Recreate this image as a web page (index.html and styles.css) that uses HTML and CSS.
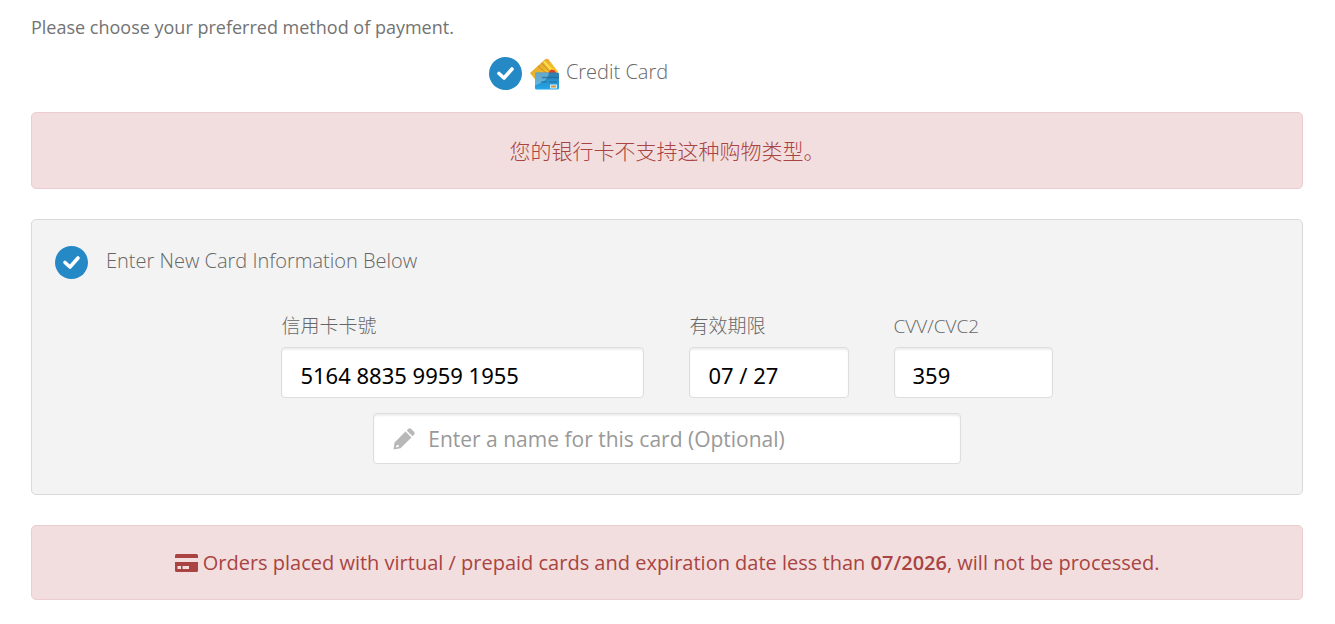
FILE: index.html
```html
<!DOCTYPE html>
<html lang="en">
<head>
<meta charset="utf-8">
<meta name="viewport" content="width=device-width, initial-scale=1">
<title>Payment method</title>
<link rel="stylesheet" href="styles.css">
</head>
<body>
<main class="payment">
  <p class="intro">Please choose your preferred method of payment.</p>
  <label class="method">
    <input class="tick" type="radio" name="method" checked>
    <svg class="cards-icon" viewBox="0 0 30 32" aria-hidden="true">
      <defs>
        <linearGradient id="gold" x1="0" y1="0" x2="1" y2="1"><stop offset="0" stop-color="#d99a35"/><stop offset=".5" stop-color="#f0b829"/><stop offset="1" stop-color="#ffdc24"/></linearGradient>
        <linearGradient id="blue" x1="0" y1="0" x2="0" y2="1"><stop offset="0" stop-color="#2c7cad"/><stop offset=".45" stop-color="#2a8fc8"/><stop offset="1" stop-color="#1fa8ec"/></linearGradient>
      </defs>
      <path d="M0 15 15 1.500Q17 0 18.500 1.500L28 13.500 21 24 7 24Z" fill="url(#gold)"/>
      <path d="M8 8l8 7M11.500 5 21 15" stroke="#c98a2c" stroke-width="1"/>
      <path d="M14 3.500 24 14.500" stroke="#ffe04b" stroke-width="2"/>
      <path d="m18 15 3-3.500 4 1 1 2.500Z" fill="#de3d28"/>
      <path d="M5 16v14q0 1.500 1.500 1.500h21q1.500 0 1.500-1.500V16q0-1.500-1.500-1.500h-21Q5 14.500 5 16Z" fill="url(#blue)"/>
      <path d="M5 16q0-1.500 1.500-1.500H19q0 8-14 13Z" fill="#8cc4de" opacity=".6"/>
      <path d="M12 19.500H29" stroke="#23658e" stroke-width="1.500" opacity=".7"/>
      <path d="M11 24h6m2 0h8" stroke="#1e6fa3"/>
      <path d="M20 26.500h7v4h-7Z" fill="#dcecf3"/>
      <path d="M21 28.500h5" stroke="#d79b35" stroke-width="2"/>
    </svg>
    <span>Credit Card</span>
  </label>

  <div class="alert alert-error" role="alert" lang="zh-CN">您的银行卡不支持这种购物类型。</div>

  <section class="panel">
    <label class="new-card">
      <input class="tick" type="radio" name="card" checked>
      <span>Enter New Card Information Below</span>
    </label>
    <div class="fields">
      <div class="field">
        <label for="number" lang="zh-TW">信用卡卡號</label>
        <input class="control" id="number" type="text" inputmode="numeric" value="5164 8835 9959 1955">
      </div>
      <div class="field">
        <label for="expiry" lang="zh-TW">有效期限</label>
        <input class="control" id="expiry" type="text" value="07 / 27">
      </div>
      <div class="field">
        <label for="cvv">CVV/CVC2</label>
        <input class="control" id="cvv" type="text" inputmode="numeric" value="359">
      </div>
    </div>
    <label class="control card-name">
      <svg class="pencil-icon" viewBox="0 0 22 22" aria-hidden="true">
        <path fill-rule="evenodd" d="M.5 21.500 1.500 14.500 12.500 3.500l6 6L7.500 20.300Zm2-2 3.300-.8-.2-1.600-1.600-.2ZM13.700 2.400 15.200 1q1.500-1.400 3 0L21 3.800q1.400 1.500 0 3L19.600 8.300Z"/>
      </svg>
      <input class="name-input" type="text" aria-label="Card name" placeholder="Enter a name for this card (Optional)">
    </label>
  </section>

  <div class="alert alert-notice">
    <svg class="card-icon" viewBox="0 0 23 18" aria-hidden="true">
      <path fill-rule="evenodd" d="M1.500 0h20Q23 0 23 1.500V4H0V1.500Q0 0 1.500 0ZM0 8h23v8.500q0 1.500-1.500 1.500h-20Q0 18 0 16.500Zm2.500 4v3h3.500v-3Zm5 0v3H14v-3Z"/>
    </svg>
    Orders placed with virtual / prepaid cards and expiration date less than <strong>07/2026</strong>, will not be processed.
  </div>
</main>
</body>
</html>
```
FILE: styles.css
```css
* {
  box-sizing: border-box;
}

body {
  margin: 0;
  background: #fff;
  color: #666;
  font-family: "Open Sans", "Noto Sans CJK SC", sans-serif;
}

.payment {
  padding: 15px 32px 24px 31px;
}

.intro {
  margin: 0;
  font-size: 18px;
  line-height: 25px;
  color: #737373;
}

.method,
.new-card {
  display: flex;
  align-items: center;
  font-size: 20px;
  font-weight: 300;
  line-height: 30px;
}

.method span,
.new-card span {
  padding-bottom: 3px;
}

.method {
  width: fit-content;
  margin: 17px auto 22px 36%;
}

.tick {
  appearance: none;
  flex: none;
  width: 33px;
  height: 33px;
  margin: 0;
  border-radius: 50%;
  background: #2489c5 url("data:image/svg+xml,%3Csvg xmlns='http://www.w3.org/2000/svg' viewBox='0 0 33 33'%3E%3Cpath d='m10 16.500 5 4.500 8-9' fill='none' stroke='white' stroke-width='3.600' stroke-linecap='round' stroke-linejoin='round'/%3E%3C/svg%3E") center / contain no-repeat;
}

.cards-icon {
  width: 30px;
  height: 32px;
  margin: 0 6px 0 8px;
}

.alert {
  padding: 22px;
  border: 1px solid #ebccd1;
  border-radius: 5px;
  background: #f2dede;
  color: #a94442;
  font-size: 20px;
  line-height: 29px;
  text-align: center;
}

.alert-error {
  padding: 23px;
  font-family: "Noto Sans CJK SC", sans-serif;
  font-size: 21px;
  font-weight: 300;
}

.panel {
  margin: 30px 0;
  padding: 26px 23px 30px;
  border: 1px solid #d9d9d9;
  border-radius: 5px;
  background: #f3f3f3;
}

.new-card {
  gap: 18px;
}

.fields {
  display: grid;
  grid-template-columns: 363fr 159fr 159fr;
  gap: 45px;
  width: 63%;
  margin: 32px auto 15px;
}

.field {
  display: flex;
  flex-direction: column;
  gap: 6px;
  min-width: 0;
  font-size: 19px;
  font-weight: 300;
  line-height: 30px;
}

.control {
  width: 100%;
  height: 51px;
  padding: 4px 18px 0;
  border: 1px solid #ddd;
  border-radius: 4px;
  background: #fff;
  box-shadow: inset 0 2px 2px #eee;
  color: #000;
  font-family: "Noto Sans", sans-serif;
  font-size: 22px;
}

.card-name {
  display: flex;
  align-items: center;
  gap: 13px;
  width: 48%;
  margin: 0 auto;
  padding: 0 19px;
}

.pencil-icon {
  flex: none;
  width: 22px;
  height: 22px;
  fill: #b8b8b8;
}

.name-input {
  flex: 1;
  min-width: 0;
  padding: 0;
  border: 0;
  outline: 0;
  background: transparent;
  font-family: "Open Sans", sans-serif;
  font-size: 21px;
}

.name-input::placeholder {
  color: #999;
  opacity: 1;
}

.card-icon {
  width: 23px;
  height: 18px;
  fill: currentColor;
  vertical-align: -2px;
}

.alert-notice strong {
  font-weight: 600;
}
```
